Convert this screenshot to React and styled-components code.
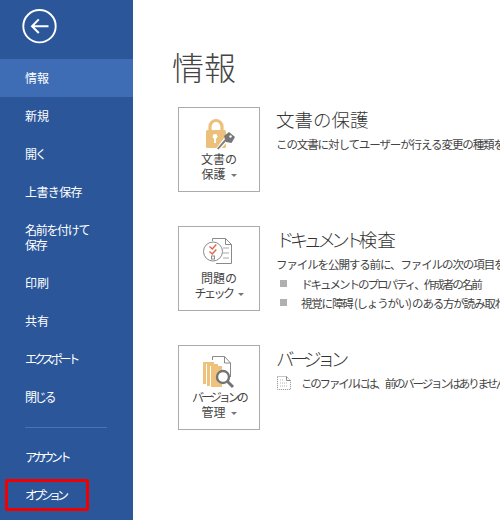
import React from 'react';
import styled, { createGlobalStyle } from 'styled-components';

const GlobalStyle = createGlobalStyle`
  html, body {
    margin: 0;
    padding: 0;
    background: #fff;
  }
  body {
    font-family: "Noto Sans CJK JP", "Noto Sans", sans-serif;
    overflow: hidden;
  }
`;

const Page = styled.div`
  display: flex;
  width: 500px;
  height: 520px;
  overflow: hidden;
  background: #fff;
`;

const Sidebar = styled.nav`
  flex: none;
  display: flex;
  flex-direction: column;
  width: 133px;
  height: 520px;
  background: #2b579a;
`;

const BackButton = styled.div`
  display: flex;
  height: 59px;
  padding: 9px 0 0 22px;
  box-sizing: border-box;
`;

const NavItem = styled.div`
  position: relative;
  display: flex;
  align-items: center;
  box-sizing: border-box;
  height: ${p => (p.$tall ? '53px' : '38px')};
  padding: 0 0 2px 25px;
  color: #fff;
  font-size: 12px;
  line-height: 15px;
  letter-spacing: ${p => p.$spacing || '0'};
  background: ${p => (p.$active ? '#3e6db5' : 'transparent')};

  ${p => p.$highlighted && `
    &::after {
      content: '';
      position: absolute;
      left: 5px;
      top: 3px;
      width: 84px;
      height: 32px;
      box-sizing: border-box;
      border: 3px solid #f00000;
      border-radius: 2px;
    }
  `}
`;

const NavDivider = styled.div`
  height: 1px;
  width: 82px;
  margin: 11px 0 10px 25px;
  background: #4a74b0;
`;

const Main = styled.main`
  flex: 1;
  min-width: 0;
  padding: 43px 0 0 39px;
`;

const PageTitle = styled.h1`
  margin: 0 0 18px;
  height: 46px;
  font-size: 32px;
  line-height: 46px;
  font-weight: 300;
  color: #444;
`;

const Section = styled.section`
  display: flex;
  gap: 16px;
  height: ${p => p.$height};
  margin-left: 6px;
`;

const ActionCard = styled.div`
  flex: none;
  display: flex;
  flex-direction: column;
  align-items: center;
  width: 82px;
  height: 85px;
  box-sizing: border-box;
  border: 1px solid #ababab;
  padding-top: 9px;
`;

const CardIcon = styled.svg`
  display: block;
  width: 34px;
  height: 34px;
`;

const CardLabel = styled.div`
  font-size: 12px;
  line-height: 15px;
  color: #444;
  text-align: center;
  letter-spacing: ${p => p.$spacing || '0'};
  white-space: nowrap;
`;

const Caret = styled.span`
  display: inline-block;
  width: 0;
  height: 0;
  margin-left: 5px;
  vertical-align: 2px;
  border-left: 3px solid transparent;
  border-right: 3px solid transparent;
  border-top: 3px solid #777;
`;

const SectionBody = styled.div`
  min-width: 0;
  margin-top: ${p => p.$offset || '0'};
  white-space: nowrap;
`;

const SectionTitle = styled.h2`
  margin: 0;
  height: 28px;
  font-size: 18.5px;
  line-height: 27px;
  font-weight: 300;
  color: #333;
`;

const Kana = styled.span`
  letter-spacing: ${p => p.$spacing};
`;

const Description = styled.p`
  margin: 0;
  height: 20px;
  font-size: 11.5px;
  line-height: 20px;
  color: #444;
  letter-spacing: ${p => p.$spacing || '-1.1px'};
`;

const BulletList = styled.ul`
  margin: 0;
  padding: 0;
  list-style: none;
`;

const Bullet = styled.li`
  display: flex;
  align-items: center;
  height: 19px;
  font-size: 11.5px;
  color: #444;
  letter-spacing: ${p => p.$spacing};

  &::before {
    content: '';
    flex: none;
    width: 7px;
    height: 7px;
    margin: 0 14px 0 4px;
    background: #b0b0b0;
  }
`;

const VersionRow = styled.div`
  display: flex;
  align-items: center;
  gap: 9px;
`;

const PageGlyph = styled.svg`
  flex: none;
  display: block;
  width: 16px;
  height: 16px;
`;

const ArrowCircle = () => (
  <svg width="36" height="36" viewBox="0 0 36 36" fill="none" stroke="#fff">
    <circle cx="17.5" cy="17.2" r="16.2" strokeWidth="1.9" />
    <path d="M10 17.2h16.5M16.8 10.4l-6.8 6.8 6.8 6.8" strokeWidth="2" />
  </svg>
);

const LockKeyIcon = () => (
  <CardIcon viewBox="0 0 34 34">
    <path d="M8 14V9.5a6 6 0 0 1 12 0V14" fill="none" stroke="#ecc07a" strokeWidth="3.2" />
    <rect x="4" y="13" width="20" height="18" rx="1.5" fill="#ecc07a" />
    <circle cx="13" cy="19.5" r="2.4" fill="#fff" />
    <rect x="12" y="20" width="2" height="6" fill="#fff" />
    <path d="M13 33l9-12 4 3-9 10z" fill="#fff" />
    <path d="M15 31.5l8.5-10 1.5 1.5-8.5 9.5z" fill="#808080" />
    <path d="M22 19l5-4 6 5-3.5 6-5.5-1z" fill="#767676" />
    <circle cx="28.5" cy="19.5" r="1.2" fill="#fff" />
  </CardIcon>
);

const CheckDocIcon = () => (
  <CardIcon viewBox="0 0 34 34">
    <path d="M10.5 5V2.5h13l6 6V27.5H14" fill="#fff" stroke="#8a8a8a" />
    <path d="M23.5 2.5v6h6" fill="none" stroke="#8a8a8a" />
    <path d="M21 12h6M21 17h6M21 22h6" stroke="#a8a8a8" />
    <circle cx="11" cy="15.5" r="9.5" fill="#fff" stroke="#8a8a8a" />
    <path d="M7.5 10.5l2.8 2.5 4-4.5M7.5 15.5l2.8 2.5 4-4.5" fill="none" stroke="#e0694a" strokeWidth="1.4" />
    <rect x="9.5" y="20" width="3" height="3" fill="none" stroke="#8a8a8a" />
  </CardIcon>
);

const VersionIcon = () => (
  <CardIcon viewBox="0 0 34 34">
    <path d="M10.5 5V1.5h12L28.5 8v14" fill="#fff" stroke="#8a8a8a" />
    <path d="M22.5 1.5V8h6" fill="none" stroke="#8a8a8a" />
    <rect x="1" y="7" width="11" height="22" fill="#eec27c" />
    <rect x="4" y="9" width="12" height="22" fill="#fff" />
    <rect x="5" y="9" width="11" height="22" fill="#eec27c" />
    <rect x="8" y="11" width="12" height="21" fill="#fff" />
    <rect x="9" y="11" width="11" height="21" fill="#eec27c" />
    <circle cx="21" cy="22" r="6" fill="#fff" stroke="#747474" strokeWidth="2.4" />
    <path d="M25.5 26.5l5.5 5.5" stroke="#747474" strokeWidth="3" />
  </CardIcon>
);

const DottedPage = () => (
  <PageGlyph viewBox="0 0 16 16" fill="none">
    <path d="M1.5 1.5h9l4 4v9h-13z" stroke="#8c8c8c" strokeDasharray="1 1" />
    <path d="M10.5 1.5v4h4" stroke="#8c8c8c" />
    <path d="M4 5h4M4 8h8M4 11h8" stroke="#b5b5b5" strokeDasharray="1 1" />
  </PageGlyph>
);

const navTop = [
  { label: '情報', active: true },
  { label: '新規' },
  { label: '開く', spacing: '-2px' },
  { label: '上書き保存', spacing: '-0.6px' },
  { label: <>名前を付けて<br />保存</>, tall: true, spacing: '-1.3px' },
  { label: '印刷' },
  { label: '共有' },
  { label: 'エクスポート', spacing: '-3.3px' },
  { label: '閉じる', spacing: '-2.3px' },
];

const App = () => {
  return (
    <Page>
      <GlobalStyle />
      <Sidebar>
        <BackButton><ArrowCircle /></BackButton>
        {navTop.map((item, i) => (
          <NavItem key={i} $active={item.active} $tall={item.tall} $spacing={item.spacing}>
            {item.label}
          </NavItem>
        ))}
        <NavDivider />
        <NavItem $spacing="-3.4px">アカウント</NavItem>
        <NavItem $spacing="-4px" $highlighted>オプション</NavItem>
      </Sidebar>
      <Main>
        <PageTitle>情報</PageTitle>
        <Section $height="119px">
          <ActionCard>
            <LockKeyIcon />
            <CardLabel>文書の</CardLabel>
            <CardLabel>保護<Caret /></CardLabel>
          </ActionCard>
          <SectionBody $offset="-1px">
            <SectionTitle>文書の保護</SectionTitle>
            <Description>この文書に対してユーザーが行える変更の種類を制御します。</Description>
          </SectionBody>
        </Section>
        <Section $height="119px">
          <ActionCard>
            <CheckDocIcon />
            <CardLabel>問題の</CardLabel>
            <CardLabel $spacing="-2.5px">チェック<Caret /></CardLabel>
          </ActionCard>
          <SectionBody>
            <SectionTitle><Kana $spacing="-4.7px">ドキュメント</Kana>検査</SectionTitle>
            <Description>ファイルを公開する前に、ファイルの次の項目を確認します。</Description>
            <BulletList>
              <Bullet $spacing="-2px">ドキュメントのプロパティ、作成者の名前</Bullet>
              <Bullet $spacing="-1.2px">視覚に障碍 (しょうがい) のある方が読み取れない可能性のある内容</Bullet>
            </BulletList>
          </SectionBody>
        </Section>
        <Section $height="85px">
          <ActionCard>
            <VersionIcon />
            <CardLabel $spacing="-3px">バージョンの</CardLabel>
            <CardLabel>管理<Caret /></CardLabel>
          </ActionCard>
          <SectionBody>
            <SectionTitle><Kana $spacing="-4.7px">バージョン</Kana></SectionTitle>
            <VersionRow>
              <DottedPage />
              <Description $spacing="-2.2px">このファイルには、前のバージョンはありません。</Description>
            </VersionRow>
          </SectionBody>
        </Section>
      </Main>
    </Page>
  );
};

export default App;
